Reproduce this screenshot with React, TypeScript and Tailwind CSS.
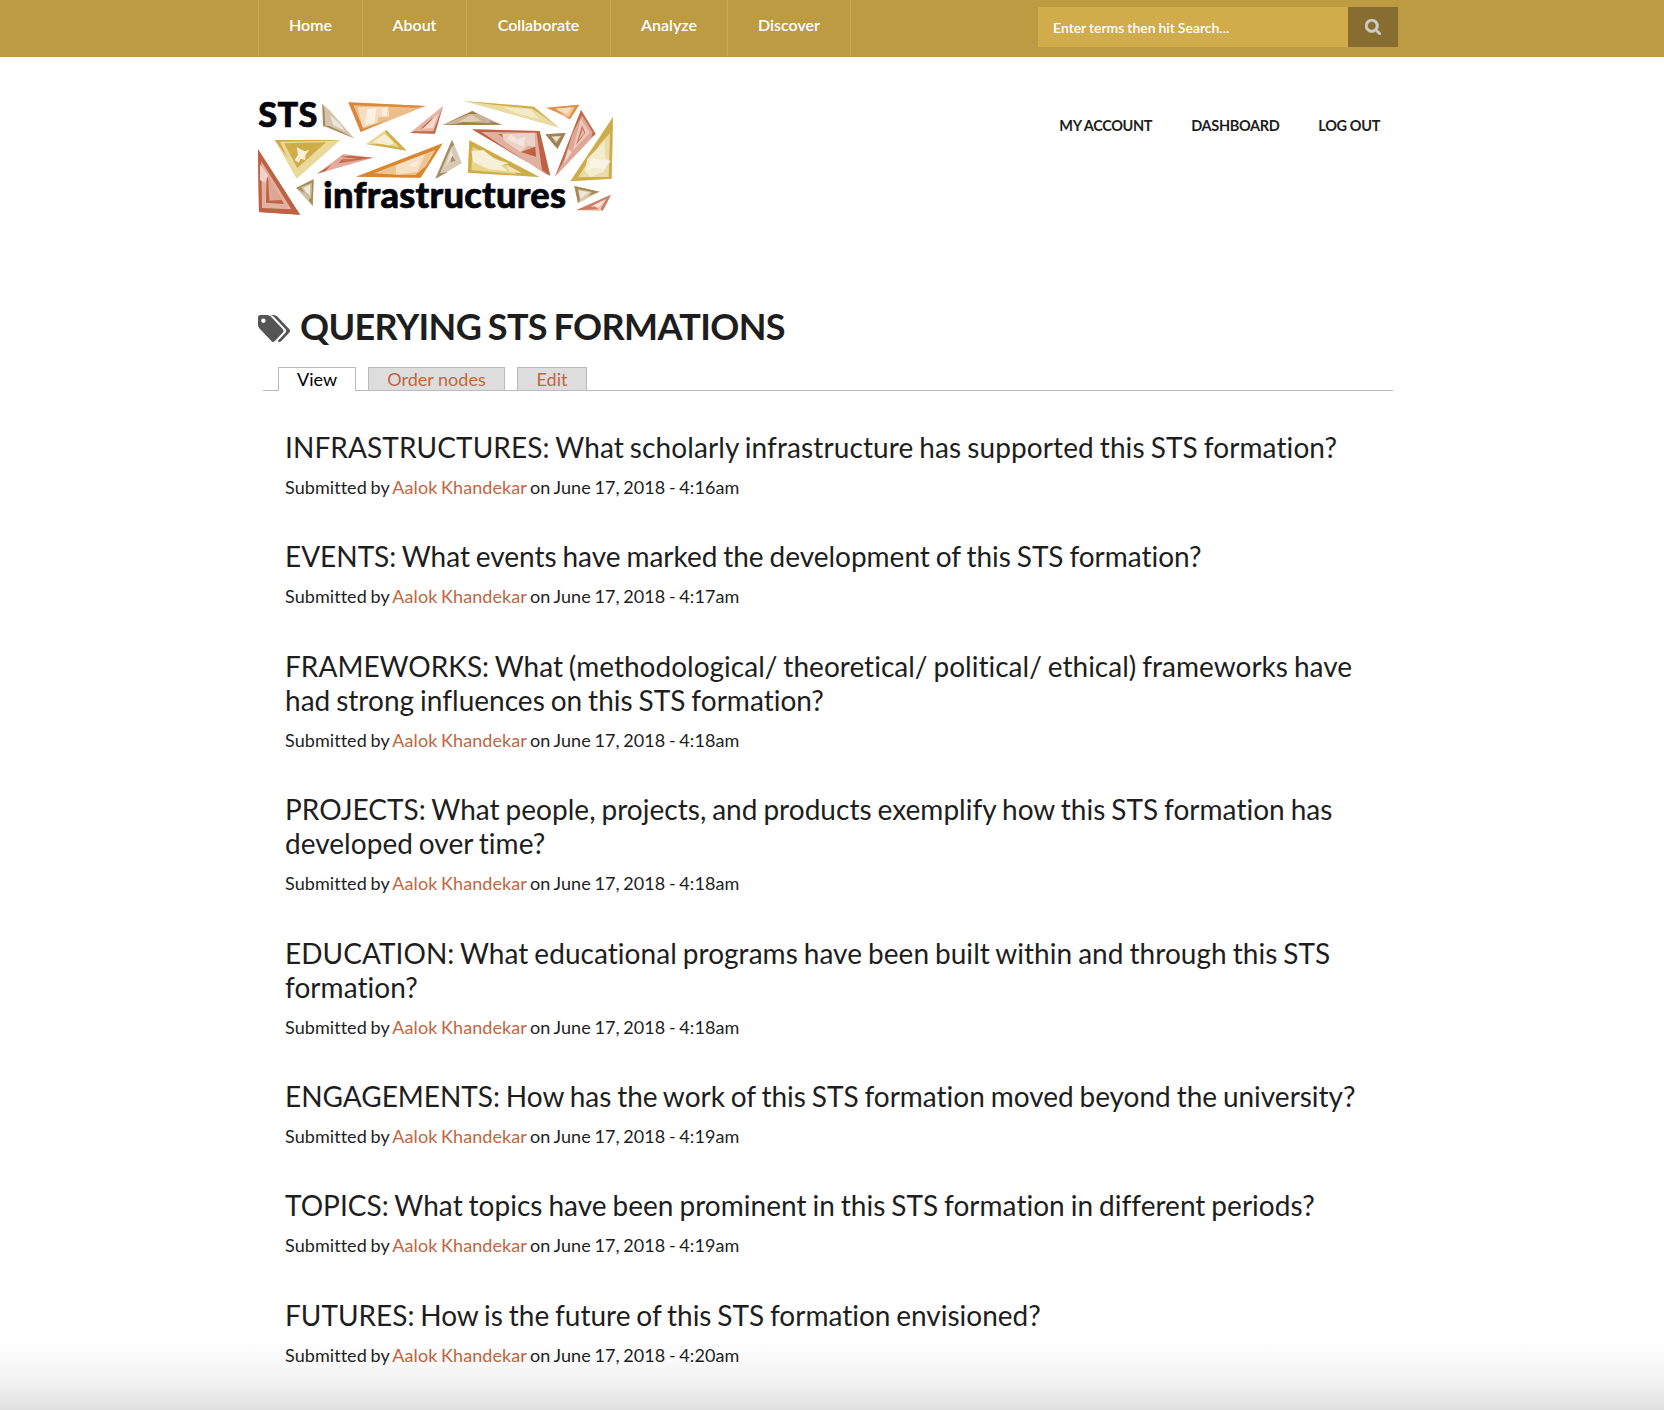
import type { ReactNode } from "react";

const NAV = [
  { label: "Home", width: "w-[104px]" },
  { label: "About", width: "w-[104px]" },
  { label: "Collaborate", width: "w-[144px]" },
  { label: "Analyze", width: "w-[117px]" },
  { label: "Discover", width: "w-[123px]" },
];

const QUESTIONS = [
  { title: "INFRASTRUCTURES: What scholarly infrastructure has supported this STS formation?", time: "4:16am", tracking: "tracking-[0.1px]" },
  { title: "EVENTS: What events have marked the development of this STS formation?", time: "4:17am", tracking: "tracking-[-0.01px]" },
  { title: "FRAMEWORKS: What (methodological/ theoretical/ political/ ethical) frameworks have had strong influences on this STS formation?", time: "4:18am", tracking: "tracking-[0.02px]" },
  { title: "PROJECTS: What people, projects, and products exemplify how this STS formation has developed over time?", time: "4:18am", tracking: "tracking-[0.03px]" },
  { title: "EDUCATION: What educational programs have been built within and through this STS formation?", time: "4:18am", tracking: "tracking-[0.05px]" },
  { title: "ENGAGEMENTS: How has the work of this STS formation moved beyond the university?", time: "4:19am", tracking: "tracking-[-0.01px]" },
  { title: "TOPICS: What topics have been prominent in this STS formation in different periods?", time: "4:19am", tracking: "tracking-[0.03px]" },
  { title: "FUTURES: How is the future of this STS formation envisioned?", time: "4:20am", tracking: "tracking-[-0.01px]" },
];

function Shard({ p, fill, edge, sides, children }: { p: string; fill: string; edge: string; sides: string; children?: ReactNode }) {
  return (
    <g>
      <polygon points={p} fill={fill} />
      <path d={sides} fill={edge} />
      {children}
    </g>
  );
}

function Logo() {
  return (
    <svg viewBox="24 30 1068 348" className="block h-[116px] w-[356px] overflow-visible" role="img" aria-label="STS infrastructures">
      {/* top row */}
      <Shard p="217,41 240,62 312,145 219,108" fill="#d3c4ab" edge="#a58a5c" sides="M217,41 L219,108 L226,110 L223,56 Z M219,106 L312,145 L270,122 L240,109 Z">
        <path d="M240,76 L268,100 L285,122 L250,106 Z" fill="#ece5da" />
      </Shard>
      <Shard p="295,37 528,48 332,126" fill="#edbe8b" edge="#d9873a" sides="M295,37 L528,48 L500,53 L310,46 L340,116 L420,87 L332,126 Z">
        <path d="M322,52 L415,50 L418,80 L385,82 L382,98 L338,112 Z" fill="#f7ddc0" />
        <path d="M352,58 L380,54 L372,100 L345,106 Z M398,54 L412,54 L410,78 L396,76 Z" fill="#fcf0e2" />
      </Shard>
      <Shard p="348,162 408,119 470,182" fill="#e9d894" edge="#cfad48" sides="M408,119 L470,182 L410,172 L348,162 L395,163 L448,172 L406,128 Z">
        <path d="M368,157 L404,131 L432,160 L418,166 Z" fill="#f6efd4" />
      </Shard>
      <Shard p="479,129 579,48 555,131" fill="#e4b5a4" edge="#bf6a4c" sides="M479,129 L555,131 L579,48 L572,66 L550,124 L496,124 Z M530,99 L548,83 L538,108 L512,116 Z">
        <path d="M518,116 L564,72 L550,114 Z" fill="#f1d9cf" />
      </Shard>
      <Shard p="577,105 667,63 756,104" fill="#c9b595" edge="#a07f4b" sides="M577,105 L756,104 L716,92 L725,100 L640,96 L620,101 Z M577,105 L667,63 L684,72 L656,72 Z">
        <path d="M626,96 L664,74 L694,92 L660,96 Z" fill="#ddd0bb" />
      </Shard>
      <Shard p="640,33 852,50 927,113" fill="#eadba0" edge="#cfae4b" sides="M640,33 L852,50 L927,113 L868,70 L846,56 L730,44 Z">
        <path d="M760,52 L840,57 L870,88 L800,70 Z" fill="#f3eaca" />
      </Shard>
      <Shard p="889,53 988,44 960,88" fill="#f1c79b" edge="#dc8f48" sides="M889,53 L988,44 L960,88 L945,80 L958,80 L974,52 L915,56 L950,78 Z">
        <path d="M918,56 L966,52 L950,72 Z" fill="#f8dfc4" />
      </Shard>

      {/* middle row */}
      <Shard p="74,150 271,150 140,266" fill="#e9d99b" edge="#cfac45" sides="M74,150 L271,150 L244,152 L90,155 L114,205 Z M102,160 L228,157 L142,234 Z">
        <path d="M140,172 L164,184 L178,180 L166,196 L166,210 L152,206 L146,218 L134,210 L144,194 Z" fill="#f7f0d9" />
      </Shard>
      <Shard p="24,178 150,374 27,366" fill="#bd6242" edge="#bd6242" sides="M24,178 L150,374 L27,366 Z">
        <path d="M34,214 L124,358 L36,354 Z" fill="#e3b1a1" />
        <path d="M50,258 L102,342 L48,338 Z" fill="#bd6242" />
        <path d="M54,256 L94,330 L58,332 Z" fill="#dfa695" />
        <path d="M30,222 L54,256 L46,278 L30,270 Z" fill="#f0d3c9" />
      </Shard>
      <Shard p="138,294 191,268 188,348" fill="#d0bf9e" edge="#a78b56" sides="M191,268 L188,348 L176,330 L184,322 L186,278 L152,292 L164,308 L138,294 Z">
        <path d="M160,294 L180,284 L180,316 L168,306 Z" fill="#f0e9dc" />
      </Shard>
      <Shard p="201,251 280,192 370,203" fill="#e3ab99" edge="#c06849" sides="M370,203 L264,220 L278,207 L324,207 L270,200 L300,197 Z M201,251 L244,224 L226,244 Z">
        <path d="M276,208 L322,207 L280,214 Z" fill="#c97860" />
      </Shard>
      <Shard p="318,260 578,160 512,263" fill="#efc693" edge="#d9862f" sides="M318,260 L578,160 L512,263 L495,256 L528,228 L556,180 L470,212 L372,250 L440,254 L510,255 L512,263 Z">
        <path d="M438,226 L526,192 L502,246 L438,254 Z" fill="#f7dfc2" />
        <path d="M470,228 L510,208 L498,232 Z" fill="#fbecd9" />
      </Shard>
      <Shard p="556,266 606,149 636,219" fill="#d7cab5" edge="#a78d62" sides="M556,266 L606,149 L612,166 L604,172 L570,250 L594,246 Z M606,196 L616,212 L602,216 Z">
        <path d="M604,178 L608,196 L586,232 Z" fill="#ece5d9" />
      </Shard>
      <Shard p="658,151 868,261 653,248" fill="#e7d58d" edge="#ceac47" sides="M658,151 L868,261 L653,248 L656,240 L800,252 L742,208 L668,170 L664,240 L654,244 Z">
        <path d="M664,184 L700,180 L732,206 L776,220 L752,226 L774,244 L716,238 L670,216 Z" fill="#f6f0d8" />
        <path d="M766,222 L816,250 L780,246 Z" fill="#f0e5b8" />
      </Shard>
      <Shard p="666,118 869,123 901,257" fill="#e2b0a0" edge="#bd6343" sides="M666,118 L869,123 L901,257 L876,240 L860,128 L694,126 L760,170 L888,252 L901,257 Z M744,132 L764,133 L778,154 Z M812,186 L856,170 L858,200 Z M868,130 L882,236 L870,170 Z">
        <path d="M756,132 L854,128 L856,170 L832,168 L812,186 L762,152 Z" fill="#eed1c7" />
        <path d="M786,132 L800,148 L826,140 L820,170 L796,160 L770,146 Z" fill="#f6e5df" />
      </Shard>
      <Shard p="886,133 947,129 922,178" fill="#c9b893" edge="#9f8252" sides="M886,133 L947,129 L922,178 L918,160 L934,138 L904,138 L922,166 L918,172 Z">
        <path d="M906,142 L930,138 L920,154 Z" fill="#e9e1cf" />
      </Shard>
      <Shard p="915,260 993,60 1037,132" fill="#dfa695" edge="#bf6748" sides="M915,260 L993,60 L1037,132 L1024,142 L1028,126 L996,76 L968,130 L944,206 Z">
        <path d="M992,86 L1020,128 L968,182 Z" fill="#ebc8bc" />
        <path d="M996,106 L1006,128 L978,166 Z" fill="#c47a60" />
        <path d="M998,118 L1003,130 L986,150 Z" fill="#e6b8a9" />
        <path d="M954,178 L966,186 L940,224 Z" fill="#f0d5cc" />
      </Shard>
      <Shard p="961,274 1089,81 1085,266" fill="#eadcaa" edge="#cfac47" sides="M961,274 L1089,81 L1085,266 L1076,262 L1080,130 L1052,160 L984,262 L1085,260 L1085,266 L961,274 Z">
        <path d="M1064,152 L1066,206 L1082,214 L1060,246 L1022,262 L1004,242 L1012,206 Z" fill="#f3ebcd" />
        <path d="M1024,204 L1046,208 L1080,212 L1062,236 L1030,234 L1010,244 Z" fill="#f8f3e2" />
      </Shard>

      {/* bottom right */}
      <Shard p="973,288 1049,305 984,340" fill="#d8c8a6" edge="#a58a58" sides="M973,288 L1049,305 L1014,318 L1026,306 L984,298 L990,330 L984,340 Z">
        <path d="M986,302 L1018,306 L992,326 Z" fill="#efe8d8" />
      </Shard>
      <Shard p="978,361 1083,314 1058,363" fill="#ecc5b7" edge="#cd7c62" sides="M978,361 L1083,314 L1058,363 L1052,356 L1070,326 L1030,346 L1046,358 Z">
        <path d="M1022,350 L1062,330 L1050,350 Z" fill="#f5e0d8" />
      </Shard>

      <text x="25" y="112" className="font-['Lato',sans-serif] font-black" fontSize="103" textLength="177" fill="#05050c" stroke="#05050c" strokeWidth="2">STS</text>
      <text x="220" y="355" className="font-['Lato',sans-serif] font-black" fontSize="109" textLength="728" fill="#05050c" stroke="#05050c" strokeWidth="2">infrastructures</text>
    </svg>
  );
}

function TagsIcon() {
  return (
    <svg viewBox="0 128 1899 1516" className="mt-[5px] block h-[27px] w-[32px] fill-[#555]" preserveAspectRatio="none" aria-hidden>
      <path d="M448 448q0-53-37.5-90.5t-90.5-37.5-90.5 37.5-37.5 90.5 37.5 90.5 90.5 37.5 90.5-37.5 37.5-90.5zm1067 576q0 53-37 90l-491 492q-39 37-91 37-53 0-90-37l-715-716q-38-37-64.500-101t-26.500-117v-416q0-52 38-90t90-38h416q53 0 117 26.500t102 64.500l715 714q37 39 37 91zm384 0q0 53-37 90l-491 492q-39 37-91 37-36 0-59-14t-53-45l470-470q37-37 37-90 0-52-37-91l-715-714q-38-38-102-64.500t-117-26.500h224q53 0 117 26.500t102 64.500l715 714q37 39 37 91z" />
    </svg>
  );
}

function SearchIcon() {
  return (
    <svg viewBox="64 128 1664 1664" className="mb-px block size-[16px] fill-[#cfcbc5]" stroke="#cfcbc5" strokeWidth="60" aria-hidden>
      <path d="M1216 832q0-185-131.5-316.5t-316.5-131.5-316.5 131.5-131.5 316.5 131.5 316.500 316.500 131.500 316.500-131.500 131.500-316.500zm512 832q0 52-38 90t-90 38q-54 0-90-38l-343-342q-179 124-399 124-143 0-273.500-55.500t-225-150-150-225-55.500-273.500 55.500-273.500 150-225 225-150 273.500-55.500 273.500 55.500 225 150 150 225 55.500 273.500q0 220-124 399l343 343q37 37 37 90z" />
    </svg>
  );
}

export default function App() {
  return (
    <div className="relative h-[1410px] overflow-hidden bg-white font-['Lato',sans-serif] text-[#1e1e1e]">
      <header className="h-[57px] bg-[#bd9b43]">
        <div className="ml-[258px] flex w-[1140px] items-start justify-between">
          <nav className="flex h-[56px] border-l border-[#cfab49]">
            {NAV.map(({ label, width }) => (
              <a key={label} className={`${width} border-r border-[#cfab49] pt-[15px] text-center text-base/5 font-semibold text-white`}>
                {label}
              </a>
            ))}
          </nav>
          <form className="mt-[7px] flex h-10">
            <div className="flex w-[310px] items-center bg-[#d0ac4b] pt-0.5 pl-[15px] text-sm font-semibold tracking-[-0.01px] text-white [word-spacing:-0.5px]">
              Enter terms then hit Search...
            </div>
            <button type="button" className="flex w-[50px] items-center justify-center bg-[#876d2f]">
              <SearchIcon />
            </button>
          </form>
        </div>
      </header>

      <div className="ml-[258px] flex w-[1140px] justify-between pt-[43px]">
        <Logo />
        <nav className="flex gap-[39px] pt-4 pr-[18px] text-[14.5px]/5 font-bold tracking-[-0.35px]">
          <a>MY ACCOUNT</a>
          <a>DASHBOARD</a>
          <a>LOG OUT</a>
        </nav>
      </div>

      <main className="ml-[258px] w-[1140px]">
        <div className="mt-[88px] flex h-[44px] items-center">
          <TagsIcon />
          <h1 className="ml-[10px] text-[36px] leading-[44px] font-bold tracking-[-0.64px] whitespace-nowrap [word-spacing:-1.5px]">QUERYING STS FORMATIONS</h1>
        </div>

        <div className="mt-[19px] ml-[5px] flex h-6 w-[1130px] gap-3 border-b border-[#bbb] pl-[15px] text-lg/[22px]">
          <a className="h-6 w-[78px] border border-b-0 border-[#bbb] bg-white text-center text-black">View</a>
          <a className="h-[23px] w-[137px] border border-b-0 border-[#bbb] bg-[#ddd] text-center text-[#bf6640]">Order nodes</a>
          <a className="h-[23px] w-[70px] border border-b-0 border-[#bbb] bg-[#ddd] text-center text-[#bf6640]">Edit</a>
        </div>

        <div className="mt-[39px] ml-[27px] flex flex-col">
          {QUESTIONS.map(({ title, time, tracking }) => (
            <article key={title} className="pb-[38.4px]">
              <h2 className={`${tracking} w-[1086px] text-[28px] leading-[34px] [word-spacing:-1.3px]`}>{title}</h2>
              <p className="mt-[10px] text-lg/[27px] tracking-[0.06px] [word-spacing:-1px]">
                Submitted by <a className="text-[#bf6640]">Aalok Khandekar</a> on June 17, 2018 - {time}
              </p>
            </article>
          ))}
        </div>
      </main>

      <div className="pointer-events-none absolute inset-x-0 bottom-0 h-[70px] bg-linear-to-b from-transparent via-black/4 to-black/12" />
    </div>
  );
}
